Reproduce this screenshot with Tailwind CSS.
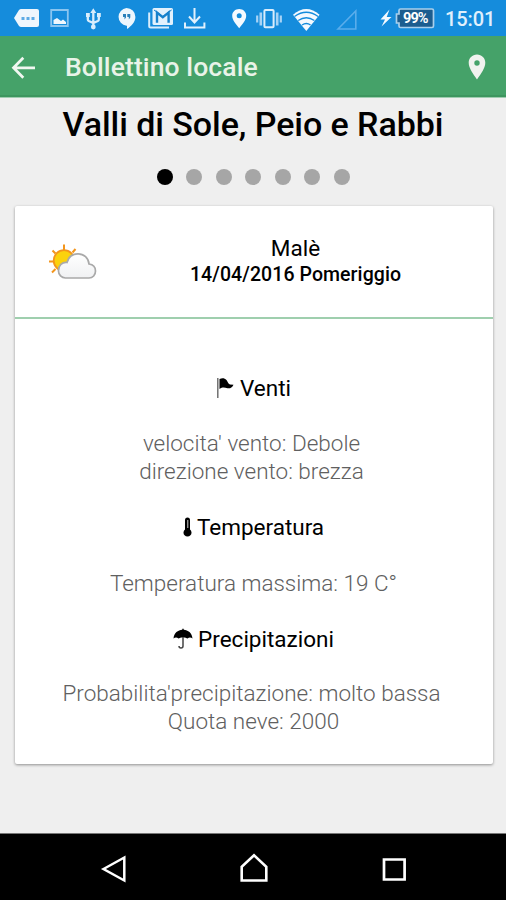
<!DOCTYPE html>
<html lang="it">
<head>
<meta charset="utf-8">
<title>Bollettino locale</title>
<script src="https://cdn.jsdelivr.net/npm/@tailwindcss/browser@4"></script>
</head>
<body class="bg-[#efefef] font-[Roboto,sans-serif] text-black">
<div class="flex h-[900px] w-[506px] flex-col overflow-hidden">
  <div class="flex h-9 shrink-0 items-center bg-[#158cdc]">
    <svg class="ml-3 h-9 w-[28px]" viewBox="12 0 28 36"><path d="M21 9h16q2 0 2 2v14q0 2-2 2H21q-1 0-2-1l-5-8 5-8q1-1 2-1z" fill="#eef6fd"/><path d="M21.500 17h3v3h-3zM26.500 17h3v3h-3zM31.500 17h3v3h-3z" fill="#5caae5"/></svg>
    <svg class="ml-[9px] h-9 w-[21px]" viewBox="49 0 21 36"><path d="M51.200 10h16.600v16H51.200z" fill="none" stroke="#8ac5f0" stroke-width="1.800"/><path d="M53.500 24v-4l3.500-2 4 3 2-1.500 3 2.500v2z" fill="#eef6fd"/></svg>
    <svg class="ml-[15px] h-9 w-[17px]" viewBox="85 0 17 36"><path d="M93.300 11v16M87.800 15v4.500q0 1 1 1.500l4.500 2 4.500-2q1-.5 1-1.500v-4" fill="none" stroke="#d9edfc" stroke-width="2.300"/><path d="M90.300 13l3-4.800 3 4.800zM86 13h3.800v4H86zM97 13h3.800v4H97z" fill="#d9edfc"/><circle cx="93.300" cy="27" r="2.400" fill="#d9edfc"/></svg>
    <svg class="ml-[14px] h-9 w-[20px]" viewBox="116 0 20 36"><path d="M126.500 8a8.900 8.900 0 0 1 8.900 8.900c0 5-4 9-8.400 12.100v-3.300h-.5a8.900 8.900 0 0 1 0-17.700z" fill="#eef6fd"/><path d="M123 14h3v3.500l-1.500 2v-2.500H123zM127.300 14h3v3.500l-1.500 2v-2.500h-1.500z" fill="#287fba"/></svg>
    <svg class="ml-[11px] h-9 w-[28px]" viewBox="147 0 28 36"><path d="M149.200 12.500v13.500q0 1.500 1.500 1.500H169" fill="none" stroke="#d9edfc" stroke-width="2"/><rect x="152.500" y="8" width="20.500" height="17" rx="1.500" fill="#e2f1fd"/><path d="M157 22.800V12.500l5.800 4.800 5.800-4.800v10.300" fill="none" stroke="#1681cc" stroke-width="2.400"/><path d="M154 10l8.800 6.300 8.800-6.300" fill="none" stroke="#1681cc" stroke-width="1"/></svg>
    <svg class="ml-[8px] h-9 w-[24px]" viewBox="183 0 24 36"><path d="M194.500 8v14M189 16.500l5.500 6 5.500-6M185 22.500v5h19.400v-5" fill="none" stroke="#e2f1fd" stroke-width="2"/></svg>
    <svg class="ml-[24px] h-9 w-[17px]" viewBox="231 0 17 36"><path fill-rule="evenodd" d="M239.200 9c4 0 7 2.900 7 6.700 0 4.600-4 8.500-7 12.600-3-4.100-7-8-7-12.600 0-3.800 3-6.700 7-6.700zm0 4.200a2.500 2.500 0 1 0 0 5 2.500 2.500 0 0 0 0-5z" fill="#f5faff"/></svg>
    <svg class="ml-[7px] h-9 w-[28px]" viewBox="255 0 28 36"><rect x="264.400" y="10" width="9.200" height="17.200" rx="1" fill="none" stroke="#d9edfc" stroke-width="2"/><path d="M260.800 12.500v13M277.200 12.500v13" stroke="#a8d3f5" stroke-width="2.600"/><path d="M257.200 15.500v7M280.800 15.500v7" stroke="#a8d3f5" stroke-width="2.200"/></svg>
    <svg class="ml-[9px] h-9 w-[29px]" viewBox="292 0 29 36"><path d="M293 14.800Q306.300 3 319.600 14.800L306.300 31z" fill="#f5faff"/><path d="M294.500 16.500q11.800-8.500 23.600 0M298.200 20.500q8.100-5.500 16.200 0M302 25q4.300-3 8.600 0" fill="none" stroke="#158cdc" stroke-width="1.300"/></svg>
    <svg class="ml-[14px] h-9 w-[24px]" viewBox="335 0 24 36"><path d="M338 29L355.800 11v18z" fill="none" stroke="#5aadeb" stroke-width="1.600"/></svg>
    <svg class="ml-[20px] h-9 w-[14px]" viewBox="379 0 14 36"><path d="M389.500 9.500l-9 10h4.500l-3.500 7 10-9.500h-4.800z" fill="#f5faff"/></svg>
    <div class="relative ml-[1px] h-9 w-[42px]">
      <svg class="h-9 w-[42px]" viewBox="394 0 42 36"><path d="M400.500 9H432q1.500 0 1.500 1.500V26q0 1.500-1.500 1.500H400.500q-1.500 0-1.500-1.500v-3h-2.500v-9H399v-3.500q0-1.500 1.500-1.500z" fill="#1c5d8f" stroke="#a9cfeb" stroke-width="1.700"/></svg>
      <span class="absolute top-[10px] left-[9px] text-[14.500px]/[17px] font-bold tracking-[-0.9px] text-white">99%</span>
    </div>
    <span class="ml-[9px] pt-0.5 text-[20px]/[36px] font-medium tracking-[-0.1px] whitespace-nowrap text-[#e0f0fc]">15:01</span>
  </div>
  <header class="flex h-[62px] shrink-0 items-center border-b border-[#9fcdb0] bg-[#45a269] shadow-[inset_0_-2px_0_#3d965f]">
    <svg class="ml-[11px] h-[26px] w-[26px]" viewBox="0 0 26 26"><path d="M12.300 3.800L2.500 13.800l9.800 10M2.800 13.800H24" fill="none" stroke="#f1f7f1" stroke-width="2.700"/></svg>
    <h1 class="ml-[28px] text-[26.500px]/[30px] font-medium tracking-[0.100px] text-[#e9f3e8]">Bollettino locale</h1>
    <svg class="mr-[20px] ml-auto h-[28px] w-[18px]" viewBox="0 0 18 28"><path fill-rule="evenodd" d="M9 1.500c4.800 0 8.300 3.600 8.300 8.300 0 5.200-4.300 11-8.300 16.700-4-5.700-8.300-11.500-8.300-16.700C.7 5.100 4.200 1.500 9 1.500zm0 5.800a2.700 2.700 0 1 0 0 5.400 2.700 2.700 0 0 0 0-5.400z" fill="#f0f2ee"/></svg>
  </header>
  <main class="flex flex-1 flex-col items-center">
    <h2 class="mt-[6px] text-[34px]/[40px] font-medium tracking-[-0.06px] whitespace-nowrap">Valli di Sole, Peio e Rabbi</h2>
    <div class="mt-[24.500px] mb-[21.500px] flex gap-[13.500px]">
      <i class="size-4 rounded-full bg-black"></i>
      <i class="size-4 rounded-full bg-[#a6a6a6]"></i>
      <i class="size-4 rounded-full bg-[#a6a6a6]"></i>
      <i class="size-4 rounded-full bg-[#a6a6a6]"></i>
      <i class="size-4 rounded-full bg-[#a6a6a6]"></i>
      <i class="size-4 rounded-full bg-[#a6a6a6]"></i>
      <i class="size-4 rounded-full bg-[#a6a6a6]"></i>
    </div>
    <section class="ml-px h-[558px] w-[478px] rounded-[2px] bg-white shadow-[0_1px_3px_rgba(0,0,0,0.4)]">
      <div class="flex h-[113px] items-start border-b-2 border-[#9fcfae]">
        <svg class="mt-[36px] ml-[33px] h-[40px] w-[50px]" viewBox="0 0 50 40">
          <defs><linearGradient id="c" x1="0" y1="0" x2="0" y2="1"><stop offset="0" stop-color="#fff"/><stop offset="1" stop-color="#f0f1f3"/></linearGradient></defs>
          <path d="M16 8V2.500M24.500 10.500l3-3.500M7.500 11.500L4.500 8.500M5 19.500H1M7.500 27l-3.500 3.500" stroke="#f3951c" stroke-width="2"/>
          <circle cx="16" cy="18.500" r="10.300" fill="#fbd20d" stroke="#f3951c" stroke-width="1.800"/>
          <path d="M18 36a7 7 0 0 1-7.500-7.500c0-5 3.500-8.500 8.500-8 1.500-5.500 5.500-8.700 11-8.700 6 0 10.500 4.200 11 10.200 4 .5 6.500 3.200 6.500 7 0 4-2.700 7-6.500 7z" fill="url(#c)" stroke="#a9a9a9" stroke-width="1.700"/>
        </svg>
        <div class="mt-[28px] ml-[63px] flex w-[270px] flex-col items-center text-center">
          <p class="text-[22.500px]/[28px]">Malè</p>
          <p class="text-[19.500px]/[26px] font-medium tracking-[0.08px] whitespace-nowrap">14/04/2016 Pomeriggio</p>
        </div>
      </div>
      <div class="flex flex-col items-center pt-[55px] text-[22.500px]/[28px] whitespace-nowrap">
        <h3 class="flex items-center gap-1.5"><svg class="h-[22px] w-[18px]" viewBox="0 0 18 22"><path d="M1.800 1v20" stroke="#666" stroke-width="1.400"/><path d="M3.500 2c3-1.500 5-1 7 1 1.500 2 1.500 4 3.500 4.500l3.500.2c-1.500 3-3.500 4-6 3.500-3-.8-5-1.400-8 .8z"/></svg>Venti</h3>
        <p class="mt-[27px] mr-1 font-light text-[#606060]">velocita' vento: Debole</p>
        <p class="mr-1 font-light text-[#606060]">direzione vento: brezza</p>
        <h3 class="mt-[28px] flex items-center gap-[5px]"><svg class="h-[22px] w-[9px]" viewBox="0 0 9 22"><path d="M2 4a2.500 2.500 0 0 1 5 0v9.500a4 4 0 1 1-5 0z"/><path d="M4.800 4v8" stroke="#ccc" stroke-width="1"/></svg>Temperatura</h3>
        <p class="mt-[28px] font-light text-[#606060]">Temperatura massima: 19 C°</p>
        <h3 class="mt-[28px] flex items-center gap-[5px]"><svg class="h-[22px] w-[20px]" viewBox="0 0 20 22"><path d="M.5 10.500C1 5 5 2 9.300 1.800V.8h1.400v1C15 2 19 5 19.500 10.500c-1.500-1.500-3.500-1.500-5 0-1.500-1.500-7.500-1.500-9 0-1.500-1.500-3.500-1.500-5 0z"/><path d="M10 9v9q0 2-2 2t-2-2" fill="none" stroke="#444" stroke-width="1.500"/></svg>Precipitazioni</h3>
        <p class="mt-[26px] mr-1 font-light text-[#606060]">Probabilita'precipitazione: molto bassa</p>
        <p class="font-light text-[#606060]">Quota neve: 2000</p>
      </div>
    </section>
  </main>
  <nav class="flex h-[67px] shrink-0 items-center border-t border-[#777] bg-black">
    <svg class="ml-[100px] h-[32px] w-[28px]" viewBox="0 0 28 32"><path d="M3.500 18L24.300 6.500v23z" fill="none" stroke="#fff" stroke-width="2.500"/></svg>
    <svg class="ml-[110px] h-[32px] w-[32px]" viewBox="0 0 32 32"><path d="M3.700 29.500V15.700L16 4.200l12.300 11.500v13.800z" fill="none" stroke="#fff" stroke-width="2.600"/></svg>
    <svg class="ml-[110px] h-[32px] w-[28px]" viewBox="0 0 28 32"><path d="M4 8.500h20.600v20H4z" fill="none" stroke="#fff" stroke-width="2.700"/></svg>
  </nav>
</div>
</body>
</html>
